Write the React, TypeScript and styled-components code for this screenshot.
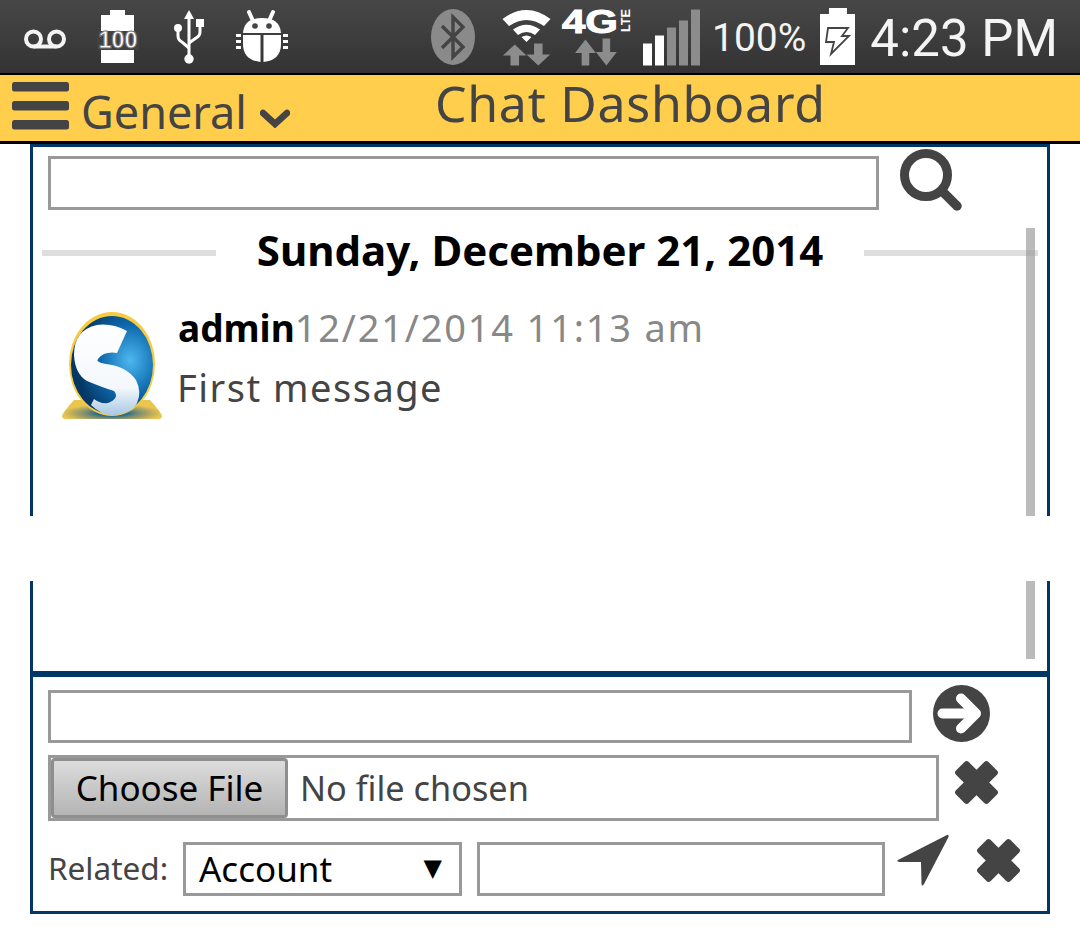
import React from "react";
import styled, { createGlobalStyle } from "styled-components";

const Global = createGlobalStyle`
  html, body { margin: 0; padding: 0; background: #fff; }
  body { width: 1080px; height: 927px; overflow: hidden; font-family: "Noto Sans", "Open Sans", sans-serif; }
  * { box-sizing: border-box; }
`;

const Page = styled.div`
  width: 1080px;
  display: flex;
  flex-direction: column;
`;

const StatusBar = styled.div`
  height: 75px;
  border-bottom: 2px solid #000;
  background: linear-gradient(#474747, #333);
  display: flex;
  align-items: center;
  padding-left: 23px;
`;

const StatusIcon = styled.svg<{ $ml?: number }>`
  display: block;
  flex: none;
  overflow: visible;
  margin-left: ${(p) => p.$ml ?? 0}px;
`;

const StatusText = styled.span<{ $size: number; $ml: number }>`
  font-family: "Roboto", sans-serif;
  color: #f4f4f4;
  font-size: ${(p) => p.$size}px;
  margin: 4px 0 0 ${(p) => p.$ml}px;
  line-height: 1;
  white-space: nowrap;
`;

const Header = styled.div`
  height: 69px;
  background: #ffce4d;
  border-bottom: 3px solid #000;
  display: flex;
  color: #444;
  padding-left: 12px;
`;

const Burger = styled.svg`
  display: block;
  margin-top: 7px;
  flex: none;
`;

const Section = styled.div`
  font-size: 45px;
  line-height: 1;
  margin: 14px 0 0 12px;
  display: flex;
  align-items: flex-start;
`;

const Chevron = styled.svg`
  display: block;
  margin: 19px 0 0 13px;
`;

const Title = styled.div`
  font-size: 50px;
  letter-spacing: 0.75px;
  line-height: 1;
  margin: 3px 0 0 145px;
  white-space: nowrap;
`;

const Panel = styled.div`
  position: relative;
  margin-left: 30px;
  width: 1020px;
  height: 770px;
  border: 3px solid #003767;
  display: flex;
  flex-direction: column;
`;

const Feed = styled.div`
  height: 524px;
  flex: none;
  padding: 9px 0 0 15px;
`;

const SearchRow = styled.div`
  display: flex;
  align-items: flex-start;
`;

const TextBox = styled.input<{ $w: number; $h?: number }>`
  display: block;
  flex: none;
  width: ${(p) => p.$w}px;
  height: ${(p) => p.$h ?? 54}px;
  border: 3px solid #999;
  background: #fff;
  outline: none;
  border-radius: 0;
  padding: 0;
`;

const DateRow = styled.div`
  display: flex;
  align-items: center;
  justify-content: space-between;
  margin: 15px 9px 0 -6px;
  height: 54px;
`;

const Rule = styled.div`
  width: 174px;
  height: 6px;
  background: rgba(190, 190, 190, 0.5);
`;

const DateText = styled.div`
  color: #000;
  font-size: 42px;
  font-weight: 700;
  white-space: nowrap;
  line-height: 1;
  padding-bottom: 6px;
`;

const Message = styled.div`
  display: flex;
  margin: 30px 0 0 14px;
`;

const Avatar = styled.svg`
  display: block;
  flex: none;
  margin-top: 2px;
`;

const MessageBody = styled.div`
  margin-left: 16px;
`;

const MetaLine = styled.div`
  font-size: 38px;
  line-height: 48px;
  white-space: nowrap;
  margin-top: -7px;
`;

const Author = styled.span`
  font-weight: 700;
  font-size: 37px;
  color: #000;
`;

const Stamp = styled.span`
  color: #888;
  letter-spacing: 1.8px;
`;

const MessageText = styled.div`
  font-size: 38px;
  line-height: 48px;
  color: #444;
  margin: 11px 0 0 -1px;
  letter-spacing: 1.5px;
`;

const Composer = styled.div`
  flex: 1;
  border-top: 6px solid #003767;
  padding: 13px 0 0 15px;
`;

const ComposerRow = styled.div<{ $mt?: number; $h: number }>`
  display: flex;
  align-items: flex-start;
  height: ${(p) => p.$h}px;
  margin-top: ${(p) => p.$mt ?? 0}px;
`;

const Glyph = styled.svg<{ $ml: number; $mt: number }>`
  display: block;
  flex: none;
  margin-left: ${(p) => p.$ml}px;
  margin-top: ${(p) => p.$mt}px;
`;

const FileField = styled.div`
  width: 891px;
  height: 66px;
  flex: none;
  border: 3px solid #999;
  display: flex;
  align-items: center;
`;

const FileButton = styled.button`
  width: 237px;
  height: 60px;
  border: 3px solid #8e8e8e;
  border-radius: 4px;
  background: linear-gradient(#dcdcdc, #b4b4b4);
  color: #000;
  font: 35px "Noto Sans", sans-serif;
  line-height: 1;
  padding: 0 0 2px;
`;

const FileName = styled.span`
  font-size: 34.3px;
  color: #444;
  margin: -2px 0 0 12px;
`;

const RelatedLabel = styled.span`
  font-size: 31.5px;
  line-height: 52px;
  color: #444;
  width: 135px;
  flex: none;
  white-space: nowrap;
`;

const SelectBox = styled.div`
  width: 279px;
  height: 54px;
  flex: none;
  border: 3px solid #999;
  display: flex;
  align-items: center;
  justify-content: space-between;
  padding: 0 17px 2px 13px;
  font-size: 35px;
  color: #000;
`;

const Caret = styled.span`
  font-family: "DejaVu Sans", sans-serif;
  font-size: 24px;
`;

const RelatedInput = styled(TextBox)`
  margin-left: 15px;
`;

const ScrollThumb = styled.div<{ $top: number; $h: number }>`
  position: absolute;
  right: 12px;
  top: ${(p) => p.$top}px;
  width: 9px;
  height: ${(p) => p.$h}px;
  background: rgba(150, 150, 150, 0.65);
`;

const GlitchBand = styled.div`
  position: absolute;
  left: -3px;
  right: -3px;
  top: 369px;
  height: 65px;
  background: #fff;
`;

const Cross = ({ ml, mt }: { ml: number; mt: number }) => (
  <Glyph $ml={ml} $mt={mt} width="45" height="45" viewBox="-22.5 -22.5 45 45">
    <rect x="-23" y="-9" width="46" height="18" rx="3" transform="rotate(45)" fill="#444" />
    <rect x="-23" y="-9" width="46" height="18" rx="3" transform="rotate(-45)" fill="#444" />
  </Glyph>
);

const Updown = ({ x, y, sx = 1, sy = 1 }: { x: number; y: number; sx?: number; sy?: number }) => (
  <g transform={`translate(${x} ${y}) scale(${sx} ${sy})`} fill="#8c8c8c">
    <path d="M0 13 L11 1 L22 13 L15 13 L15 24 L7 24 L7 13 Z" />
    <path d="M29 0 L37 0 L37 12 L44 12 L33 24 L22 12 L29 12 Z" />
  </g>
);

export default function App() {
  return (
    <Page>
      <Global />
      <StatusBar>
        <StatusIcon width="44" height="28" viewBox="0 0 44 28">
          <circle cx="10.5" cy="16" r="7.5" fill="none" stroke="#f4f4f4" strokeWidth="4" />
          <circle cx="33.5" cy="16" r="7.5" fill="none" stroke="#f4f4f4" strokeWidth="4" />
          <rect x="10.5" y="21.5" width="23" height="4" fill="#f4f4f4" />
        </StatusIcon>
        <StatusIcon $ml={30} width="42" height="53" viewBox="0 0 42 53">
          <path d="M13 0 H28 V5 H37 V53 H4 V5 H13 Z" fill="#fff" />
          <rect x="0" y="21" width="42" height="19" fill="#414141" />
          <text x="21" y="38" textAnchor="middle" fontFamily="Liberation Sans, sans-serif" fontWeight="700" fontSize="23" fill="#fff" stroke="#777" strokeWidth="1" textLength="39" lengthAdjust="spacingAndGlyphs">100</text>
        </StatusIcon>
        <StatusIcon $ml={35} width="30" height="54" viewBox="0 0 30 54">
          <g fill="none" stroke="#fff" strokeWidth="3">
            <path d="M15 6 V46" />
            <path d="M4 20 V26 Q4 30 8 32 L15 38" />
            <path d="M26 14 V22 Q26 26 22 28 L15 33" />
          </g>
          <path d="M15 0 L20 9 H10 Z" fill="#fff" />
          <circle cx="4" cy="18" r="4" fill="#fff" />
          <rect x="22" y="9" width="8" height="8" fill="#fff" />
          <circle cx="15" cy="49" r="4.7" fill="#fff" />
        </StatusIcon>
        <StatusIcon $ml={32} width="52" height="52" viewBox="0 0 52 52">
          <path d="M13 1 L17 10 M37 1 L33 10" stroke="#fff" strokeWidth="4" strokeLinecap="round" />
          <path d="M7 22 Q8 7 26 7 Q44 7 45 22 Z" fill="#fff" />
          <circle cx="19" cy="15" r="2.8" fill="#444" />
          <circle cx="33" cy="15" r="2.8" fill="#444" />
          <path d="M7 24 H24.5 V51 Q7 49 7 33 Z M27.5 24 H45 V33 Q45 49 27.5 51 Z" fill="#fff" />
          <path d="M0 23 H5 V26 H0 Z M0 29 H5 V32 H0 Z M0 35 H5 V38 H0 Z M47 23 H52 V26 H47 Z M47 29 H52 V32 H47 Z M47 35 H52 V38 H47 Z" fill="#fff" />
        </StatusIcon>
        <StatusIcon $ml={143} width="44" height="56" viewBox="0 0 44 56">
          <ellipse cx="22" cy="28" rx="22" ry="28" fill="#8a8a8a" />
          <path d="M11 17 L32 38 L22 48 V8 L32 18 L11 39" fill="none" stroke="#444" strokeWidth="3.4" />
        </StatusIcon>
        <StatusIcon $ml={27} width="50" height="58" viewBox="0 0 50 58">
          <path d="M0.5 11 Q24.5 -7 48.5 11 L42 18 Q24.5 6 7 18 Z" fill="#fff" />
          <path d="M11 21.5 Q24.5 12 38 21.5 L33 27 Q24.5 21 16 27 Z" fill="#fff" />
          <path d="M19.5 29 Q24.5 26 29.5 29 L24.5 34 Z" fill="#fff" />
          <Updown x={1} y={35.5} sx={1.07} sy={0.92} />
        </StatusIcon>
        <StatusIcon $ml={10} width="70" height="58" viewBox="0 0 70 58">
          <text x="0" y="24.5" fontFamily="Liberation Sans, sans-serif" fontWeight="700" fontSize="33" fill="#fff" stroke="#fff" strokeWidth="1" textLength="56" lengthAdjust="spacingAndGlyphs">4G</text>
          <text x="0" y="0" transform="translate(68 24) rotate(-90)" fontFamily="Liberation Sans, sans-serif" fontWeight="700" fontSize="12" fill="#fff" textLength="23" lengthAdjust="spacingAndGlyphs">LTE</text>
          <Updown x={13} y={30.5} sx={0.95} sy={1.12} />
        </StatusIcon>
        <StatusIcon $ml={11} width="58" height="58" viewBox="0 0 58 58">
          <rect x="0" y="35.5" width="9" height="22" fill="#fff" />
          <rect x="12" y="27.5" width="9" height="30" fill="#fff" />
          <rect x="24" y="19.5" width="9" height="38" fill="#8c8c8c" />
          <rect x="36" y="12.5" width="9" height="45" fill="#8c8c8c" />
          <rect x="48" y="1.5" width="9" height="56" fill="#8c8c8c" />
        </StatusIcon>
        <StatusText $size={39} $ml={11}>100%</StatusText>
        <StatusIcon $ml={14} width="36" height="57" viewBox="0 0 36 57">
          <path d="M9 0 H27 V6 H35 V57 H0 V6 H9 Z" fill="#fff" />
          <path d="M8 20 H28 L22 28 H29 L11 46 L14 34 H6 Z" fill="none" stroke="#444" strokeWidth="1.8" />
        </StatusIcon>
        <StatusText $size={51} $ml={14}>4:23 PM</StatusText>
      </StatusBar>

      <Header>
        <Burger width="57" height="48" viewBox="0 0 57 48">
          <rect width="57" height="9.5" rx="2.5" fill="#444" />
          <rect y="19" width="57" height="9.5" rx="2.5" fill="#444" />
          <rect y="38" width="57" height="9.5" rx="2.5" fill="#444" />
        </Burger>
        <Section>
          General
          <Chevron width="30" height="20" viewBox="0 0 30 20">
            <path d="M3 5 L15 16 L27 5" fill="none" stroke="#444" strokeWidth="6.5" strokeLinecap="round" strokeLinejoin="miter" />
          </Chevron>
        </Section>
        <Title>Chat Dashboard</Title>
      </Header>

      <Panel>
        <Feed>
          <SearchRow>
            <TextBox $w={831} />
            <Glyph $ml={21} $mt={-7} width="62" height="62" viewBox="0 0 62 62">
              <circle cx="26" cy="26" r="21.5" fill="none" stroke="#444" strokeWidth="9" />
              <path d="M43 43 L57 57" stroke="#444" strokeWidth="9.5" strokeLinecap="round" />
            </Glyph>
          </SearchRow>
          <DateRow>
            <Rule />
            <DateText>Sunday, December 21, 2014</DateText>
            <Rule />
          </DateRow>
          <Message>
            <Avatar width="100" height="108" viewBox="0 0 100 108">
              <defs>
                <radialGradient id="base" cx="0.5" cy="0.7" r="0.5">
                  <stop offset="0.2" stopColor="#0a5f96" />
                  <stop offset="0.55" stopColor="#7f8f70" />
                  <stop offset="1" stopColor="#ecc54f" />
                </radialGradient>
                <radialGradient id="orb" cx="0.72" cy="0.45" r="0.65">
                  <stop offset="0" stopColor="#4db8f0" />
                  <stop offset="0.55" stopColor="#0d69ad" />
                  <stop offset="1" stopColor="#053764" />
                </radialGradient>
                <linearGradient id="letter" x1="0" y1="0" x2="0" y2="1">
                  <stop offset="0" stopColor="#ffffff" />
                  <stop offset="0.7" stopColor="#f4f8fc" />
                  <stop offset="1" stopColor="#a8c8e4" />
                </linearGradient>
              </defs>
              <path d="M0 104 Q1 100 12 88 L88 88 Q99 100 100 104 Q100 107 96 107 L4 107 Q0 107 0 104 Z" fill="url(#base)" />
              <ellipse cx="50" cy="52" rx="43" ry="52" fill="#f7cb3f" />
              <ellipse cx="50" cy="53" rx="41" ry="49" fill="url(#orb)" />
              <path d="M65 19 Q50 11 35 13 Q12 18 12 43 Q13 62 25 69 Q42 76 52 79 Q58 86 46 91 Q38 92 32 87 L29 93 Q40 104 52 103 Q70 101 75 91 Q80 80 74 68 Q64 54 44 52 Q33 50 36 47 Q42 39 55 41 Z" fill="url(#letter)" />
            </Avatar>
            <MessageBody>
              <MetaLine>
                <Author>admin</Author>
                <Stamp>12/21/2014 11:13 am</Stamp>
              </MetaLine>
              <MessageText>First message</MessageText>
            </MessageBody>
          </Message>
        </Feed>
        <Composer>
          <ComposerRow $h={53}>
            <TextBox $w={864} $h={53} />
            <Glyph $ml={21} $mt={-5} width="57" height="57" viewBox="0 0 57 57">
              <circle cx="28.5" cy="28.5" r="28.5" fill="#444" />
              <path d="M9.5 28.5 H42" fill="none" stroke="#fff" strokeWidth="10" strokeLinecap="round" />
              <path d="M28 13.5 L43 28.5 L28 43.5" fill="none" stroke="#fff" strokeWidth="10" strokeLinejoin="round" strokeLinecap="round" />
            </Glyph>
          </ComposerRow>
          <ComposerRow $mt={12} $h={66}>
            <FileField>
              <FileButton>Choose File</FileButton>
              <FileName>No file chosen</FileName>
            </FileField>
            <Cross ml={15} mt={5} />
          </ComposerRow>
          <ComposerRow $mt={21} $h={54}>
            <RelatedLabel>Related:</RelatedLabel>
            <SelectBox>
              Account
              <Caret>▼</Caret>
            </SelectBox>
            <RelatedInput $w={408} />
            <Glyph $ml={12} $mt={-8} width="52" height="52" viewBox="0 0 52 52">
              <path d="M1 26 L50 1 Q52 0 51.5 3 L27 50 Q25 53 24.5 50 L24 28 L2 28 Q-1 27 1 26 Z" fill="#444" />
            </Glyph>
            <Cross ml={27} mt={-4} />
          </ComposerRow>
        </Composer>
        <ScrollThumb $top={81} $h={288} />
        <ScrollThumb $top={434} $h={78} />
        <GlitchBand />
      </Panel>
    </Page>
  );
}
